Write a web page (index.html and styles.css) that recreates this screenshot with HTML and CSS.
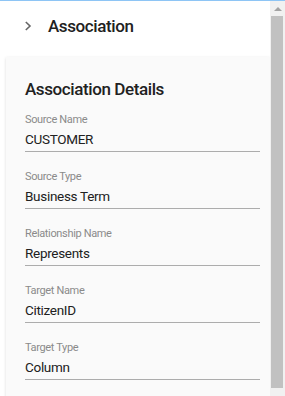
FILE: index.html
```html
<!DOCTYPE html>
<html lang="en">

<head>
    <meta charset="UTF-8">
    <meta name="viewport" content="width=device-width, initial-scale=1.0">
    <title>Association</title>
    <link rel="stylesheet" href="styles.css">
</head>

<body>
    <div id="frame">
        <div id="panel">
            <header>
                <svg class="chevron" width="8" height="12" viewBox="0 0 8 12">
                    <path d="M1.8 2 L6 6 L1.8 10" fill="none" stroke="#666" stroke-width="1.6" />
                </svg>
                <h1>Association</h1>
            </header>

            <div class="card">
                <h2>Association Details</h2>

                <div class="field">
                    <label>Source Name</label>
                    <div class="value">CUSTOMER</div>
                </div>
                <div class="field">
                    <label>Source Type</label>
                    <div class="value">Business Term</div>
                </div>
                <div class="field">
                    <label>Relationship Name</label>
                    <div class="value">Represents</div>
                </div>
                <div class="field">
                    <label>Target Name</label>
                    <div class="value">CitizenID</div>
                </div>
                <div class="field">
                    <label>Target Type</label>
                    <div class="value">Column</div>
                </div>
            </div>
        </div>

        <div class="scrollbar">
            <div class="arrow"></div>
            <div class="thumb"></div>
        </div>
    </div>
</body>

</html>
```

FILE: styles.css
```css
html,
body {
    margin: 0;
    padding: 0;
    height: 100%;
    overflow: hidden;
}

body {
    font-family: Roboto, 'Noto Sans', sans-serif;
    background-color: #fff;
    color: #212121;
}

#frame {
    display: flex;
    height: 100%;
    box-sizing: border-box;
    border-top: 1px solid #8ec5f5;
}

#panel {
    flex: 1;
    min-width: 0;
    overflow: hidden;
}

header {
    height: 50px;
    display: flex;
    align-items: center;
    padding-left: 24px;
}

header .chevron {
    margin-right: 16px;
}

header h1 {
    margin: 0;
    font-size: 17px;
    font-weight: 500;
    letter-spacing: -0.4px;
    color: #212121;
}

.card {
    margin: 6px 0 0 6px;
    padding: 20px 10px 40px 19px;
    background-color: #fafafa;
    box-shadow: 0 1px 3px rgba(0, 0, 0, 0.14);
}

.card h2 {
    margin: 0 0 12px;
    font-size: 17px;
    line-height: 24px;
    font-weight: 500;
    letter-spacing: -0.4px;
    color: #212121;
}

.field {
    border-bottom: 1px solid #acacac;
    padding-bottom: 2px;
    margin-bottom: 18px;
}

.field label {
    display: block;
    font-size: 11px;
    line-height: 14px;
    letter-spacing: -0.35px;
    color: #8a8a8a;
    margin-bottom: 2px;
}

.field .value {
    font-size: 13.5px;
    line-height: 20px;
    letter-spacing: -0.3px;
    color: #212121;
}

.scrollbar {
    width: 15px;
    background-color: #f1f1f1;
    display: flex;
    flex-direction: column;
}

.scrollbar .arrow {
    height: 15px;
    display: flex;
    justify-content: center;
    align-items: center;
}

.scrollbar .arrow::before {
    content: '';
    border-left: 4px solid transparent;
    border-right: 4px solid transparent;
    border-bottom: 4px solid #a3a3a3;
}

.scrollbar .thumb {
    height: 372px;
    margin: 0 2px 0 1px;
    background-color: #c1c1c1;
}
```
